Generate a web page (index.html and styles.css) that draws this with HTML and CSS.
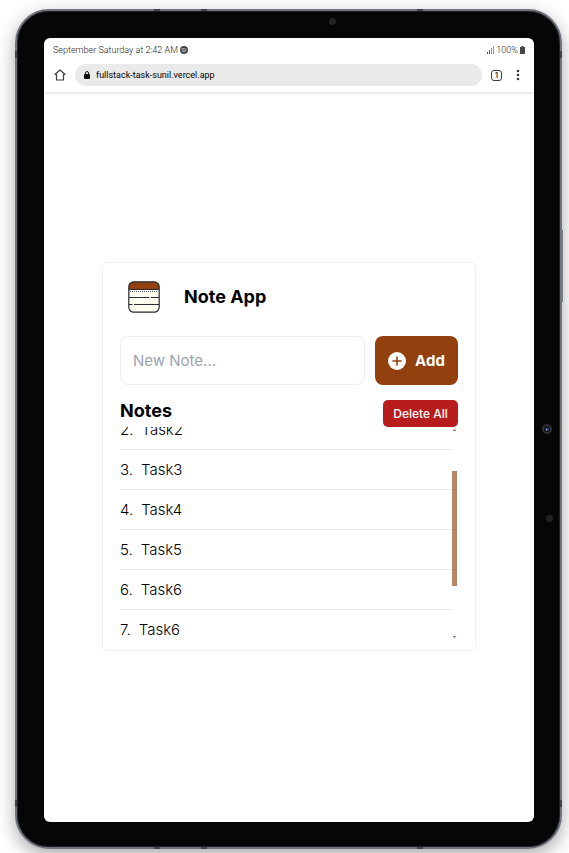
FILE: index.html
```html
<!DOCTYPE html>
<html lang="en">
<head>
<meta charset="utf-8">
<meta name="viewport" content="width=device-width, initial-scale=1">
<title>Note App</title>
<link rel="stylesheet" href="styles.css">
</head>
<body>
<div class="tablet">
  <i class="seam seam-top seam-a"></i><i class="seam seam-top seam-b"></i><i class="seam seam-top seam-c"></i>
  <i class="seam seam-bottom seam-a"></i><i class="seam seam-bottom seam-b"></i><i class="seam seam-bottom seam-c"></i>
  <i class="seam seam-side seam-left seam-high"></i><i class="seam seam-side seam-right seam-high"></i>
  <i class="seam seam-side seam-left seam-low"></i><i class="seam seam-side seam-right seam-low"></i>
  <i class="power"></i>
  <i class="sensor sensor-top"></i>
  <i class="sensor sensor-side"></i>
  <svg class="camera" viewBox="0 0 10 10" aria-hidden="true"><circle cx="5" cy="5" r="5" fill="#303033"/><circle cx="5" cy="5" r="3" fill="#10101c"/><circle cx="5.3" cy="5" r="1.8" fill="#242b78"/><circle cx="4.6" cy="5.6" r=".8" fill="#d5dcff"/></svg>
  <div class="screen">
    <header class="browser">
      <div class="status">
        <span class="status-part">September Saturday at 2:42 AM
          <svg width="8" height="8" viewBox="0 0 16 16" aria-hidden="true"><circle cx="8" cy="8" r="8" fill="#444"/><path d="M3.5 5.5c3-1 6.500-.6 9 .8M4 8.300c2.600-.8 5.400-.4 7.500.8M4.700 11c2-.6 4.200-.3 6 .7" fill="none" stroke="#ddd" stroke-width="1.300" stroke-linecap="round"/></svg>
        </span>
        <span class="status-part">
          <svg width="7" height="8" viewBox="0 0 7 8" aria-hidden="true"><path d="M0 6h1v2H0zM2 4h1v4H2z" fill="#555"/><path d="M4 2h1v6H4zM6 0h1v8H6z" fill="#999"/></svg>
          100%
          <svg width="5" height="8" viewBox="0 0 5 8" aria-hidden="true"><path d="M1.500 0h2v1H5v7H0V1h1.500z" fill="#444"/></svg>
        </span>
      </div>
      <div class="toolbar">
        <a class="tool" href="#" aria-label="Home"><svg width="12" height="12" viewBox="0 0 12 12"><path d="M6 1 1 5.500h1.500v5.500h7V5.500H11z" fill="none" stroke="#3c3c3c" stroke-width="1.200" stroke-linejoin="round"/></svg></a>
        <div class="address">
          <svg width="6" height="8" viewBox="0 0 6 8" aria-hidden="true"><path d="M1.500 3.500V2a1.500 1.500 0 0 1 3 0v1.500" fill="none" stroke="#111"/><rect y="3" width="6" height="5" rx=".7" fill="#111"/></svg>
          <span>fullstack-task-sunil.vercel.app</span>
        </div>
        <button class="tool tabs" type="button" aria-label="Tabs">1</button>
        <button class="tool" type="button" aria-label="Menu"><svg width="4" height="12" viewBox="0 0 4 12"><g fill="#3c3c3c"><circle cx="2" cy="2" r="1.300"/><circle cx="2" cy="6" r="1.300"/><circle cx="2" cy="10" r="1.300"/></g></svg></button>
      </div>
    </header>
    <main class="page">
      <section class="card">
        <div class="brand">
          <svg width="32" height="32" viewBox="0 0 32 32" aria-hidden="true"><rect x=".8" y=".8" width="30.400" height="30.400" rx="5" fill="#fffdf0"/><path d="M.8 9V5.800a5 5 0 0 1 5-5h20.400a5 5 0 0 1 5 5V9z" fill="#92400e"/><path d="M1 8.500h30" stroke="#2b2b35"/><path d="M2 10.500h28" stroke="#555" stroke-dasharray="1 1"/><path d="M1 16.500h20.500M23 16.500h8M1 23.500h3.500M6 23.500h25" stroke="#2b2b35"/><rect x=".8" y=".8" width="30.400" height="30.400" rx="5" fill="none" stroke="#2b2b38" stroke-width="1.200"/></svg>
          <h1>Note App</h1>
        </div>
        <form class="new-note">
          <input type="text" aria-label="New note" placeholder="New Note...">
          <button class="add" type="button"><svg width="18" height="18" viewBox="0 0 18 18" aria-hidden="true"><circle cx="9" cy="9" r="9" fill="#fff"/><path d="M9 5v8M5 9h8" stroke="#92400e" stroke-width="1.600" stroke-linecap="round"/></svg>Add</button>
        </form>
        <div class="notes-head">
          <h2>Notes</h2>
          <button class="delete" type="button">Delete All</button>
        </div>
        <div class="notes">
          <ul class="list">
            <li><span>2.</span><span>Task2</span></li>
            <li><span>3.</span><span>Task3</span></li>
            <li><span>4.</span><span>Task4</span></li>
            <li><span>5.</span><span>Task5</span></li>
            <li><span>6.</span><span>Task6</span></li>
            <li><span>7.</span><span>Task6</span></li>
          </ul>
          <div class="scrollbar" aria-hidden="true">
            <svg width="5" height="2" viewBox="0 0 5 2"><path d="M2 0h1v1h1v1H1V1h1z" fill="#b98564"/></svg>
            <i class="thumb"></i>
            <svg width="5" height="2" viewBox="0 0 5 2"><path d="M1 0h3v1H3v1H2V1H1z" fill="#b98564"/></svg>
          </div>
        </div>
      </section>
    </main>
  </div>
</div>
</body>
</html>
```
FILE: styles.css
```css
* { box-sizing: border-box; }

body {
  display: flex;
  min-height: 100vh;
  margin: 0;
  padding: 9px 7px 4px 15px;
  overflow: hidden;
  background: #fff;
  font-family: Inter, "Liberation Sans", sans-serif;
  color: #000;
}

h1, h2, ul { margin: 0; padding: 0; }
h1, h2 { font-size: 18px; line-height: 24px; font-weight: 700; }
h2 { line-height: 22px; }
button, input { font: inherit; margin: 0; }
button { cursor: pointer; border: 0; }
svg { display: block; flex: none; }

/* Device */
.tablet {
  position: relative;
  display: flex;
  flex: 1;
  min-width: 0;
  padding: 27px 26px 25px 27px;
  border: 2px solid #70737c;
  border-radius: 34px;
  background: #060606;
  box-shadow: inset 0 0 0 1px #20212a, 0 6px 18px rgba(0, 0, 0, 0.34);
}

.seam { position: absolute; background: #41434a; }
.seam-top, .seam-bottom { width: 6px; height: 2px; }
.seam-top { top: -2px; }
.seam-bottom { bottom: -2px; }
.seam-a { left: 137px; }
.seam-b { left: 184px; }
.seam-c { right: 137px; }
.seam-side { width: 2px; height: 7px; }
.seam-left { left: -2px; }
.seam-right { right: -2px; }
.seam-high { top: 40px; }
.seam-low { bottom: 40px; }

.power {
  position: absolute;
  top: 219px;
  right: -3px;
  width: 2px;
  height: 72px;
  background: #777984;
}

.sensor {
  position: absolute;
  width: 7px;
  height: 7px;
  border-radius: 50%;
  background: #222224;
}
.sensor-top { top: 7px; left: 312px; }
.sensor-side { top: 504px; right: 7px; }
.camera { position: absolute; top: 413px; right: 8px; width: 10px; height: 10px; }

.screen {
  display: flex;
  flex: 1;
  flex-direction: column;
  min-width: 0;
  overflow: hidden;
  border-radius: 6px;
  background: #fff;
}

/* Browser chrome */
.browser {
  padding: 6px 9px;
  box-shadow: 0 1px 3px rgba(0, 0, 0, 0.15);
}

.status {
  display: flex;
  justify-content: space-between;
  font: 300 9px/12px Roboto, sans-serif;
  color: #222;
}
.status-part { display: flex; align-items: center; gap: 2px; }

.toolbar { display: flex; align-items: center; gap: 9px; margin: 8px 1px 0 0; }
.tool {
  display: flex;
  align-items: center;
  justify-content: center;
  width: 13px;
  height: 12px;
  padding: 0;
  background: none;
}
.tabs {
  width: 11px;
  height: 11px;
  border: 1px solid #3c3c3c;
  border-radius: 3px;
  font-size: 7px;
  font-weight: 700;
  color: #3c3c3c;
}
.address {
  display: flex;
  flex: 1;
  align-items: center;
  gap: 6px;
  height: 22px;
  padding: 0 9px;
  border-radius: 11px;
  background: #eaeaea;
  font: 9px/12px Roboto, sans-serif;
}

/* Note app */
.page {
  display: flex;
  flex: 1;
  align-items: center;
  justify-content: center;
  padding: 0 58px 1px;
}

.card {
  flex: 1;
  min-width: 0;
  max-width: 420px;
  padding: 0 17px;
  border: 1px solid #f0f0f2;
  border-radius: 5px;
}

.brand {
  display: flex;
  align-items: center;
  gap: 24px;
  padding: 18px 8px 23px;
}

.new-note { display: flex; gap: 10px; }
.new-note input {
  flex: 1;
  min-width: 0;
  height: 49px;
  padding: 0 12px;
  border: 1px solid #eeeff1;
  border-radius: 8px;
  background: #fff;
  font-size: 15px;
}
.new-note input::placeholder { color: #9ca3af; opacity: 1; }

.add {
  display: flex;
  align-items: center;
  justify-content: center;
  gap: 9px;
  width: 83px;
  border-radius: 8px;
  background: #92400e;
  font-size: 15px;
  font-weight: 700;
  color: #fff;
}

.notes-head {
  display: flex;
  justify-content: space-between;
  margin-top: 15px;
}
.delete {
  width: 75px;
  height: 27px;
  padding: 0;
  border-radius: 5px;
  background: #b91c1c;
  font-size: 12px;
  font-weight: 500;
  color: #fff;
}

.notes { display: flex; gap: 1px; height: 223px; }
.list {
  display: flex;
  flex: 1;
  flex-direction: column;
  justify-content: flex-end;
  overflow: hidden;
  list-style: none;
}
.list li {
  display: flex;
  flex: none;
  align-items: center;
  gap: 8px;
  height: 40px;
  border-bottom: 1px solid #e8e9ec;
  font-size: 15px;
  font-weight: 300;
}
.list li:last-child { border-color: transparent; }

.scrollbar {
  display: flex;
  flex-direction: column;
  align-items: flex-start;
  justify-content: space-between;
  width: 6px;
  padding: 2px 0 12px;
}
.thumb { width: 5px; height: 115px; margin-bottom: 10px; background: #b98564; }
```
